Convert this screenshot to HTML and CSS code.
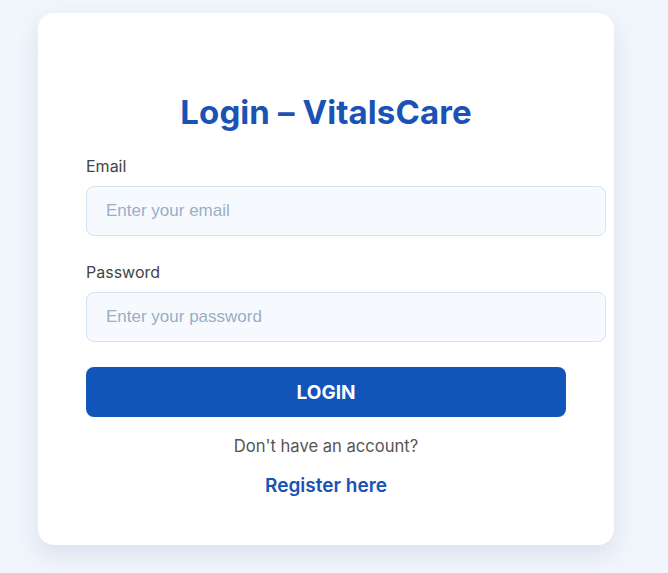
FILE: index.html
```html
<!DOCTYPE html>
<html lang="en">
<head>
<meta charset="utf-8">
<title>Login - VitalsCare</title>
<link rel="stylesheet" href="styles.css">
</head>
<body>
<main class="page">
  <form class="card">
    <h2 class="title">Login – VitalsCare</h2>
    <label class="label" for="email">Email</label>
    <input class="input" id="email" type="email" placeholder="Enter your email">
    <label class="label label-gap" for="password">Password</label>
    <input class="input" id="password" type="password" placeholder="Enter your password">
    <button class="btn" type="button">LOGIN</button>
    <p class="note">Don't have an account?</p>
    <a class="link" href="#">Register here</a>
  </form>
</main>
</body>
</html>
```

FILE: styles.css
```css
* { box-sizing: border-box; }
html, body { margin: 0; padding: 0; }
body {
  background: #f1f6fd;
  font-family: "Inter", "Liberation Sans", sans-serif;
  width: 668px;
  height: 573px;
  overflow: hidden;
}
.page {
  padding: 13px 0 0 38px;
}
.card {
  width: 576px;
  height: 532px;
  background: #ffffff;
  border-radius: 16px;
  box-shadow: 0 10px 25px rgba(30, 40, 80, 0.10);
  padding: 79px 48px 48px 48px;
  display: flex;
  flex-direction: column;
  align-items: flex-start;
}
.title {
  margin: 0 0 24px 0;
  align-self: center;
  font-size: 33px;
  line-height: 40px;
  font-weight: 700;
  color: #1a52b5;
  letter-spacing: 0.1px;
}
.label {
  font-size: 16px;
  line-height: 20px;
  color: #444444;
  margin-bottom: 10px;
}
.label-gap { margin-top: 26px; }
.input {
  box-sizing: content-box;
  width: 480px;
  height: 48px;
  padding: 0 19px;
  border: 1px solid #d6e3f1;
  border-radius: 8px;
  background: #f6faff;
  font-family: "Liberation Sans", Arial, sans-serif;
  font-size: 17px;
  color: #333;
  outline: none;
}
.input::placeholder { color: #9aaec4; }
.btn {
  margin-top: 25px;
  width: 480px;
  height: 50px;
  border: none;
  border-radius: 8px;
  background: #1155bb;
  color: #ffffff;
  font-family: "Inter", "Liberation Sans", sans-serif;
  font-size: 19px;
  font-weight: 700;
  cursor: pointer;
}
.note {
  width: 480px;
  margin: 18px 0 0 0;
  text-align: center;
  font-size: 16.6px;
  line-height: 22px;
  color: #555555;
}
.link {
  width: 480px;
  margin-top: 18px;
  text-align: center;
  font-size: 19px;
  line-height: 22px;
  font-weight: 600;
  color: #1a52b5;
  text-decoration: none;
}
```
